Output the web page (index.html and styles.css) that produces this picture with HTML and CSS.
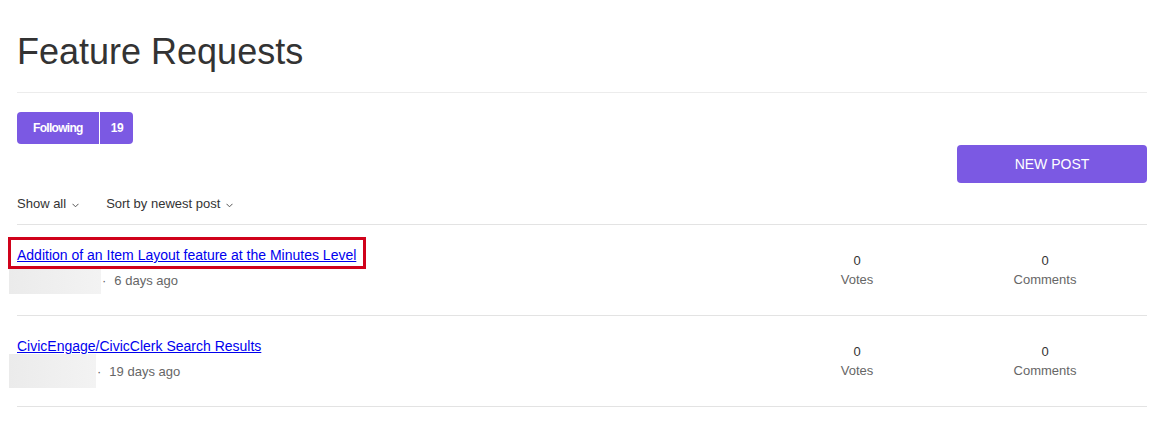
FILE: index.html
```html
<!DOCTYPE html>
<html lang="en">
<head>
    <meta charset="UTF-8">
    <meta name="viewport" content="width=device-width, initial-scale=1.0">
    <title>Feature Requests</title>
    <link rel="stylesheet" href="styles.css">
</head>
<body>
    <div class="page">
        <h1 class="page-title">Feature Requests</h1>

        <div class="follow-row">
            <button class="follow-btn" type="button">
                <span class="follow-label">Following</span>
                <span class="follow-count">19</span>
            </button>
        </div>

        <div class="post-row">
            <button class="new-post" type="button">NEW POST</button>
        </div>

        <div class="filters">
            <span class="filter">Show all
                <svg class="chev" width="7" height="5" viewBox="0 0 7 5"><polyline points="0.5,0.8 3.5,3.8 6.5,0.8" fill="none" stroke="#555" stroke-width="1"/></svg>
            </span>
            <span class="filter">Sort by newest post
                <svg class="chev" width="7" height="5" viewBox="0 0 7 5"><polyline points="0.5,0.8 3.5,3.8 6.5,0.8" fill="none" stroke="#555" stroke-width="1"/></svg>
            </span>
        </div>

        <ul class="posts">
            <li class="post">
                <div class="post-main">
                    <a class="post-title highlight" href="#">Addition of an Item Layout feature at the Minutes Level</a>
                    <div class="post-meta">
                        <span class="author-blur blur-a"></span>
                        <span class="dot">&middot;</span>
                        <span class="post-date">6 days ago</span>
                    </div>
                </div>
                <div class="stat">
                    <span class="stat-num">0</span>
                    <span class="stat-label">Votes</span>
                </div>
                <div class="stat">
                    <span class="stat-num">0</span>
                    <span class="stat-label">Comments</span>
                </div>
            </li>
            <li class="post">
                <div class="post-main">
                    <a class="post-title" href="#">CivicEngage/CivicClerk Search Results</a>
                    <div class="post-meta">
                        <span class="author-blur blur-b"></span>
                        <span class="dot">&middot;</span>
                        <span class="post-date">19 days ago</span>
                    </div>
                </div>
                <div class="stat">
                    <span class="stat-num">0</span>
                    <span class="stat-label">Votes</span>
                </div>
                <div class="stat">
                    <span class="stat-num">0</span>
                    <span class="stat-label">Comments</span>
                </div>
            </li>
        </ul>
    </div>
</body>
</html>
```

FILE: styles.css
```css
body {
    font-family: "Liberation Sans", Arial, sans-serif;
    margin: 0;
    padding: 0;
    background-color: #fff;
    color: #333;
}
.page {
    padding: 0 13px 0 17px;
}
.page-title {
    margin: 31px 0 0;
    font-size: 36px;
    font-weight: normal;
    line-height: 41px;
    color: #333;
    padding-bottom: 20px;
    border-bottom: 1px solid #ececec;
}
.follow-row {
    margin-top: 19px;
}
.follow-btn {
    display: inline-flex;
    align-items: stretch;
    height: 32px;
    padding: 0;
    border: none;
    border-radius: 4px;
    background-color: #7b59e3;
    color: #fff;
    font-family: inherit;
    font-size: 12px;
    font-weight: bold;
    cursor: pointer;
}
.follow-label {
    display: flex;
    align-items: center;
    padding: 0 16px;
    border-right: 1px solid #fff;
    letter-spacing: -0.7px;
}
.follow-count {
    display: flex;
    align-items: center;
    padding: 0 10px 0 11px;
    letter-spacing: -0.4px;
}
.post-row {
    display: flex;
    justify-content: flex-end;
    margin-top: 1px;
}
.new-post {
    width: 190px;
    height: 38px;
    border: none;
    border-radius: 4px;
    background-color: #7b59e3;
    color: #fff;
    font-family: inherit;
    font-size: 14px;
    cursor: pointer;
}
.filters {
    display: flex;
    gap: 27px;
    padding: 13px 0 12px;
    border-bottom: 1px solid #e3e3e3;
    font-size: 13px;
    line-height: 16px;
}
.filter {
    display: inline-flex;
    align-items: center;
    gap: 6px;
}
.chev {
    margin-top: 3px;
}
.posts {
    list-style: none;
    margin: 0;
    padding: 0;
}
.post {
    display: grid;
    grid-template-columns: 1fr 188px 188px;
    align-items: center;
    padding: 22px 8px 18px 0;
    border-bottom: 1px solid #e3e3e3;
}
.post-main {
    display: flex;
    flex-direction: column;
    align-items: flex-start;
}
.post-title {
    position: relative;
    font-size: 14px;
    line-height: 16px;
    color: #0000ee;
}
.highlight::before {
    content: "";
    position: absolute;
    top: -10px;
    bottom: -6px;
    left: -9px;
    right: -10px;
    border: 3px solid #d0021b;
}
.post-meta {
    display: flex;
    align-items: center;
    height: 34px;
    margin-left: -8px;
    font-size: 13px;
    color: #666;
}
.author-blur {
    display: block;
    background: linear-gradient(90deg, #ebebeb, #f3f3f3);
}
.blur-a {
    width: 92px;
    height: 25px;
    margin-top: 3px;
}
.blur-b {
    width: 87px;
    height: 34px;
}
.dot {
    margin: 0 8px 0 1px;
}
.stat {
    display: flex;
    flex-direction: column;
    align-items: center;
    padding-bottom: 4px;
    font-size: 13px;
    line-height: 19px;
}
.stat-num {
    color: #333;
}
.stat-label {
    color: #666;
}
```
